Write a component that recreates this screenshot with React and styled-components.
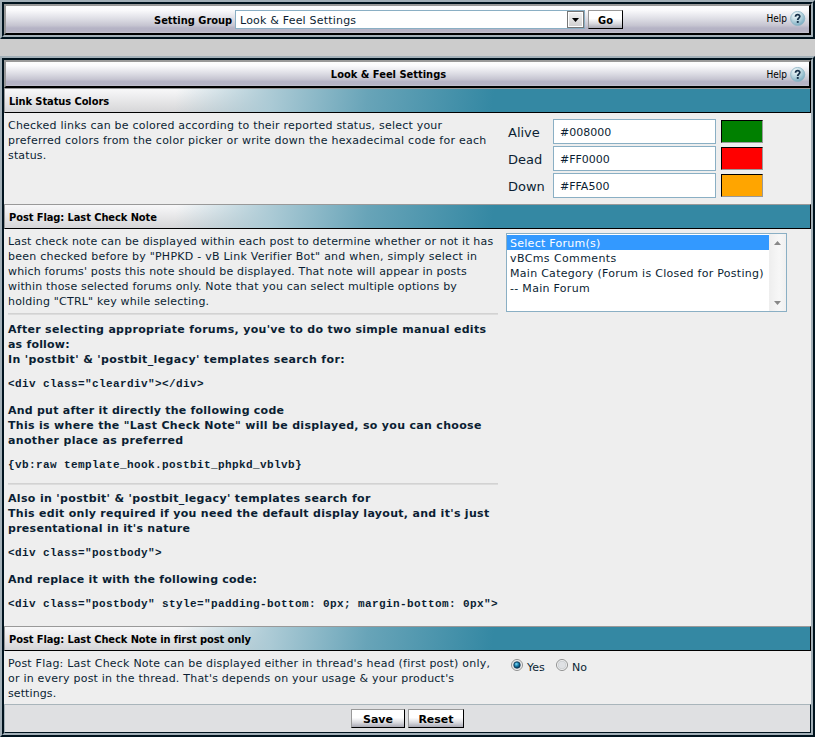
import React from 'react';
import styled, { createGlobalStyle, css } from 'styled-components';

const ink = '#0b1e33';
const ui = "'DejaVu Sans Condensed', 'DejaVu Sans', sans-serif";
const body = "'DejaVu Sans', sans-serif";

const Global = createGlobalStyle`
  *, *::before, *::after { box-sizing: border-box; }
  body { margin: 0; background: #ccc; font: 11px/15px ${body}; color: ${ink}; }
`;

const Page = styled.div`
  width: 815px;
  height: 737px;
  display: flex;
  flex-direction: column;
  gap: 17px;
`;

const Panel = styled.section`
  border: 2px solid;
  border-color: #a3b0b8 #00131e #00131e #a3b0b8;
  height: ${(p) => p.$height}px;
  display: flex;
`;

const PanelInner = styled.div`
  flex: 1;
  min-width: 0;
  border: 2px solid;
  border-color: #00131e #a3b0b8 #a3b0b8 #00131e;
  background: #eee;
  display: flex;
  flex-direction: column;
`;

const TitleBar = styled.header`
  height: ${(p) => p.$height}px;
  flex: none;
  border: 2px solid;
  border-color: #999 #000 #000 #999;
  background: linear-gradient(#fdfdfd 0%, #fafafc 15%, #dfdfe6 46%, #c6c5d1 72%, #b5b3c5 82%, #b6b4c5 94%, #c4c3cf 100%);
  display: grid;
  grid-template-columns: 148px 1fr 148px;
  color: #000;
  font: bold 11px/15px ${ui};
`;

const Title = styled.h1`
  grid-column: 2;
  margin: 0;
  padding: 5px 38px 0 0;
  font: inherit;
  text-align: center;
  white-space: nowrap;
`;

const GroupForm = styled.form`
  grid-column: 2;
  display: flex;
  padding-top: 4px;
  white-space: nowrap;
`;

const GroupLabel = styled.label`
  width: 81px;
  line-height: 21px;
`;

const Dropdown = styled.div`
  width: 350px;
  height: 19px;
  margin-right: 3px;
  border: 1px solid #8aafc4;
  background: #fff;
  color: ${ink};
  display: flex;
  justify-content: space-between;
  padding-left: 4px;
  font: 11px/19px ${body};
  letter-spacing: 0.2px;
`;

const Arrow = styled.span`
  width: 17px;
  height: 17px;
  border: 1px solid #777;
  box-shadow: inset 0 0 0 1px #fff;
  background: linear-gradient(#f2f2f2, #cfcfcf);
  display: grid;
  place-items: center;
  svg { display: block; }
`;

const Button = styled.button`
  width: ${(p) => p.$width}px;
  height: 19px;
  padding: 1px 0 0;
  border: 1px solid;
  border-color: #999 #000 #000 #999;
  background: linear-gradient(#fff 0%, #fff 45%, #d8d8dd 75%, #a9a9b4 100%);
  color: #000;
  font: bold 11px/17px ${(p) => (p.$wide ? body : ui)};
`;

const Help = styled.a`
  grid-column: 3;
  display: flex;
  justify-content: flex-end;
  gap: 3px;
  padding: 5px 3px 0 0;
  font: 10px/15px ${ui};
  svg { display: block; flex: none; }
`;

const SectionTitle = styled.h2`
  height: 25px;
  flex: none;
  margin: 0;
  border: 1px solid;
  border-color: #999 #000 #000 #999;
  padding: 1px 0 0 4px;
  background:
    linear-gradient(98deg, rgba(178,208,218,0) 170px, #abcad5 265px, #68a4b8 360px, #3488a3 485px),
    linear-gradient(#f8f8f9, #d6d6d8);
  color: #000;
  font: bold 11px/23px ${ui};
  letter-spacing: -0.08px;
  white-space: pre;
`;

const Row = styled.div`
  height: ${(p) => p.$height}px;
  flex: none;
  display: grid;
  grid-template-columns: 498px 1fr;
  padding: 4px 0 0 4px;
`;

const Copy = styled.div`
  width: 490px;
`;

const Line = styled.div`
  height: 15px;
  padding-top: 1px;
  white-space: pre;
  ${(p) => p.$bold && css`font-weight: bold;`}
  letter-spacing: ${(p) => p.$track || 0}px;
`;

const Code = styled.code`
  display: block;
  height: 15px;
  padding-top: 1px;
  margin: 10px 0 11px;
  white-space: pre;
  font: bold 11px/15px 'Liberation Mono', monospace;
  letter-spacing: 0.4px;
`;

const Rule = styled.hr`
  height: 2px;
  margin: ${(p) => p.$margin};
  border: 0;
  border-top: 1px solid #d2d2d2;
  background: #dcdcdc;
`;

const ColorList = styled.div`
  display: flex;
  flex-direction: column;
  gap: 2px;
  padding: 2px 0 0 2px;
`;

const ColorRow = styled.div`
  display: grid;
  grid-template-columns: 45px 163px 47px;
  grid-template-rows: 25px;
  align-items: center;
  height: 25px;
`;

const ColorLabel = styled.label`
  height: 25px;
  padding-top: 1px;
  font-size: 13px;
  line-height: 25px;
`;

const ColorInput = styled.input`
  width: 163px;
  height: 25px;
  border: 1px solid #8aafc4;
  background: #fff;
  padding: 1px 0 0 6px;
  color: ${ink};
  font: 11px/22px ${body};
  outline: 0;
`;

const Swatch = styled.span`
  width: 42px;
  height: 23px;
  margin-left: 5px;
  border: 1px solid;
  border-color: #000 #999 #999 #000;
  background: ${(p) => p.$color};
`;

const ListBox = styled.div`
  width: 281px;
  height: 79px;
  border: 1px solid #8aafc4;
  background: #fff;
  display: flex;
`;

const Options = styled.div`
  flex: 1;
  padding: 1px 0 0;
`;

const Option = styled.div`
  height: 15px;
  padding: 1px 0 0 3px;
  white-space: pre;
  letter-spacing: ${(p) => p.$track || 0}px;
  ${(p) => p.$selected && css`background: #3399ff; color: #fff;`}
`;

const Scroll = styled.div`
  width: 17px;
  background: linear-gradient(90deg, #eee, #f7f7f7 60%, #f0f0f0);
  display: flex;
  flex-direction: column;
  justify-content: space-between;
  align-items: center;
  padding: 7px 0 6px;
  svg { display: block; }
`;

const Radios = styled.div`
  display: flex;
  padding: 3px 0 0 5px;
  svg { display: block; margin-right: 4px; }
`;

const RadioLabel = styled.label`
  display: flex;
  width: 45px;
  padding-top: 1px;
  line-height: 17px;
`;

const Footer = styled.footer`
  height: 29px;
  flex: none;
  border: 1px solid;
  border-color: #a9b5bb #00131e #00131e #a9b5bb;
  background: #dfe0e2;
  display: flex;
  gap: 3px;
  padding: 4px 0 0 346px;
`;

const HelpLink = () => (
  <Help>
    <span>Help</span>
    <svg width="16" height="16" viewBox="0 0 16 16">
      <defs>
        <radialGradient id="orb" cx=".35" cy=".25" r=".8">
          <stop offset="0" stopColor="#f4fafc" />
          <stop offset=".45" stopColor="#c3dbe4" />
          <stop offset="1" stopColor="#76a9bf" />
        </radialGradient>
      </defs>
      <circle cx="7.7" cy="7.5" r="7.1" fill="url(#orb)" stroke="#8db5c5" strokeWidth=".8" />
      <path d="M5.5 5.7C5.6 3 9.9 3 9.8 5.5C9.7 7.1 7.7 7.1 7.7 9" fill="none" stroke="#163049" strokeWidth="1.8" />
      <rect x="6.8" y="10" width="1.9" height="1.9" fill="#163049" />
    </svg>
  </Help>
);

const Radio = ({ on }) => (
  <svg width="12" height="12" viewBox="0 0 12 12">
    <defs>
      <radialGradient id="ball" cx=".4" cy=".35" r=".7">
        <stop offset="0" stopColor="#7fdcf8" />
        <stop offset=".5" stopColor="#167ba8" />
        <stop offset="1" stopColor="#062c4c" />
      </radialGradient>
    </defs>
    <circle cx="6" cy="6" r="5.5" fill="#f8f8f8" stroke="#8e8f8f" />
    <circle cx="6" cy="6" r="3.9" fill="#dfe1e4" stroke="#c4c8cc" strokeWidth=".7" />
    {on && <circle cx="6" cy="6" r="3.2" fill="url(#ball)" stroke="#0b3354" strokeWidth=".8" />}
  </svg>
);

const colors = [['Alive', '#008000'], ['Dead', '#FF0000'], ['Down', '#FFA500']];

export default function App() {
  return (
    <Page>
      <Global />
      <Panel $height={39}>
        <PanelInner>
          <TitleBar $height={31}>
            <GroupForm>
              <GroupLabel>Setting Group</GroupLabel>
              <Dropdown>
                Look &amp; Feel Settings
                <Arrow><svg width="7" height="4" viewBox="0 0 7 4"><path d="M0 0h7L3.5 4z" fill="#000" /></svg></Arrow>
              </Dropdown>
              <Button type="button" $width={35}>Go</Button>
            </GroupForm>
            <HelpLink />
          </TitleBar>
        </PanelInner>
      </Panel>
      <Panel $height={681}>
        <PanelInner>
          <TitleBar $height={28}>
            <Title>Look &amp; Feel Settings</Title>
            <HelpLink />
          </TitleBar>
          <SectionTitle>Link Status Colors</SectionTitle>
          <Row $height={91}>
            <Copy>
              <Line $track={0.22}>Checked links can be colored according to their reported status, select your</Line>
              <Line $track={0.245}>preferred colors from the color picker or write down the hexadecimal code for each</Line>
              <Line $track={0.15}>status.</Line>
            </Copy>
            <ColorList>
              {colors.map(([name, value]) => (
                <ColorRow key={name}>
                  <ColorLabel>{name}</ColorLabel>
                  <ColorInput readOnly value={value} />
                  <Swatch $color={value} />
                </ColorRow>
              ))}
            </ColorList>
          </Row>
          <SectionTitle>Post Flag: Last Check Note</SectionTitle>
          <Row $height={397}>
            <Copy>
              <Line $track={0.165}>Last check note can be displayed within each post to determine whether or not it has</Line>
              <Line $track={0.25}>been checked before by "PHPKD - vB Link Verifier Bot" and when, simply select in</Line>
              <Line $track={0.16}>which forums' posts this note should be displayed. That note will appear in posts</Line>
              <Line $track={0.165}>within those selected forums only. Note that you can select multiple options by</Line>
              <Line $track={0.2}>holding "CTRL" key while selecting.</Line>
              <Rule $margin="5px 0 6px" />
              <Line $bold $track={0.3}>After selecting appropriate forums, you've to do two simple manual edits</Line>
              <Line $bold $track={0.2}>as follow:</Line>
              <Line $bold $track={0.36}>In 'postbit' &amp; 'postbit_legacy' templates search for:</Line>
              <Code>{'<div class="cleardiv"></div>'}</Code>
              <Line $bold $track={0.24}>And put after it directly the following code</Line>
              <Line $bold $track={0.31}>This is where the "Last Check Note" will be displayed, so you can choose</Line>
              <Line $bold $track={0.35}>another place as preferred</Line>
              <Code>{'{vb:raw template_hook.postbit_phpkd_vblvb}'}</Code>
              <Rule $margin="0 0 5px" />
              <Line $bold $track={0.34}>Also in 'postbit' &amp; 'postbit_legacy' templates search for</Line>
              <Line $bold $track={0.3}>This edit only required if you need the default display layout, and it's just</Line>
              <Line $bold $track={0.28}>presentational in it's nature</Line>
              <Code>{'<div class="postbody">'}</Code>
              <Line $bold $track={0.22}>And replace it with the following code:</Line>
              <Code>{'<div class="postbody" style="padding-bottom: 0px; margin-bottom: 0px">'}</Code>
            </Copy>
            <ListBox>
              <Options>
                <Option $selected $track={0.27}>Select Forum(s)</Option>
                <Option $track={0.4}>vBCms Comments</Option>
                <Option $track={0.28}>Main Category (Forum is Closed for Posting)</Option>
                <Option $track={0.3}>-- Main Forum</Option>
              </Options>
              <Scroll>
                <svg width="7" height="4" viewBox="0 0 7 4"><path d="M0 4h7L3.5 0z" fill="#888" /></svg>
                <svg width="7" height="4" viewBox="0 0 7 4"><path d="M0 0h7L3.5 4z" fill="#888" /></svg>
              </Scroll>
            </ListBox>
          </Row>
          <SectionTitle>Post Flag: Last Check Note in first post only</SectionTitle>
          <Row $height={53}>
            <Copy>
              <Line $track={0.22}>Post Flag: Last Check Note can be displayed either in thread's head (first post) only,</Line>
              <Line $track={0.22}>or in every post in the thread. That's depends on your usage &amp; your product's</Line>
              <Line $track={0.1}>settings.</Line>
            </Copy>
            <Radios>
              <RadioLabel><Radio on />Yes</RadioLabel>
              <RadioLabel><Radio />No</RadioLabel>
            </Radios>
          </Row>
          <Footer>
            <Button $wide $width={54}>Save</Button>
            <Button $wide $width={56}>Reset</Button>
          </Footer>
        </PanelInner>
      </Panel>
    </Page>
  );
}
